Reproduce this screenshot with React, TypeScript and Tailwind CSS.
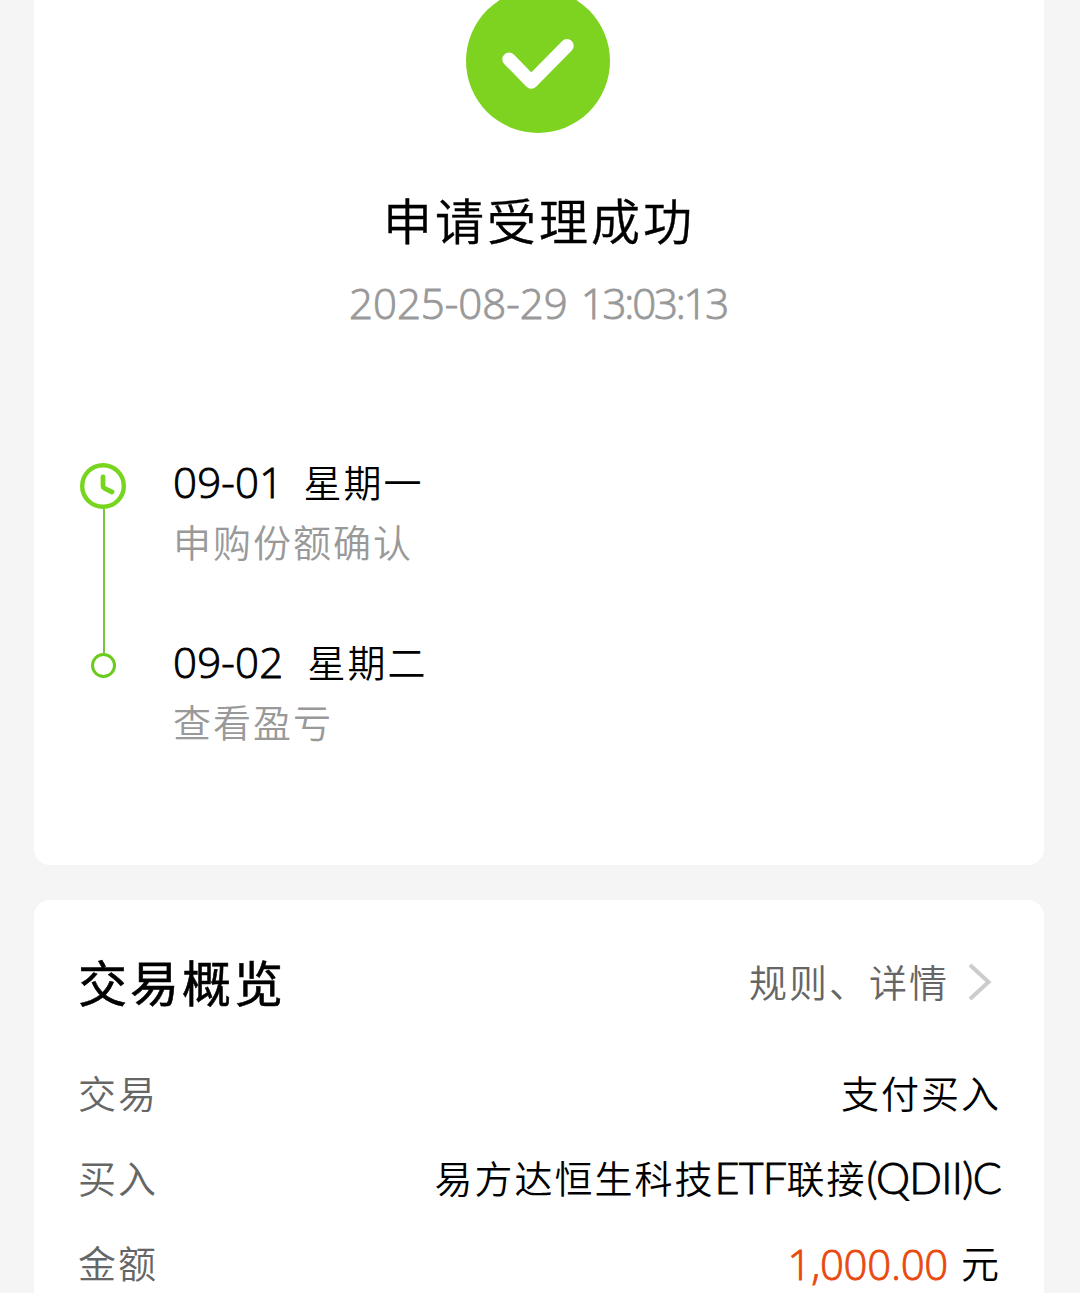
import React from 'react';
import clsx from 'clsx';

const steps = [
  { id: 'confirm', date: '09-01', weekday: '星期一', label: '申购份额确认', gap: 'ml-5' },
  { id: 'profit', date: '09-02', weekday: '星期二', label: '查看盈亏', gap: 'ml-6' }
];

function Digits({ children, className }: { children: React.ReactNode; className?: string }) {
  return (
    <span
      className={clsx(
        "font-['Open_Sans','Noto_Sans_CJK_SC',sans-serif] text-[42px] font-light [-webkit-text-stroke:0.9px_currentColor]",
        className
      )}
    >
      {children}
    </span>
  );
}

function Letters({ children }: { children: React.ReactNode }) {
  return (
    <span className="pt-[3px] font-['Lato','Noto_Sans_CJK_SC',sans-serif] text-[43px] font-light tracking-[-0.7px] [-webkit-text-stroke:0.9px_currentColor]">
      {children}
    </span>
  );
}

function SuccessIcon() {
  return (
    <svg className="mr-0.5 block h-[133px] w-36" viewBox="0 11 144 133" fill="none">
      <circle cx="72" cy="72" r="72" fill="#7ed321" />
      <path
        d="M43 70.3 65.3 93 101 56.7"
        stroke="#fff"
        strokeWidth="13.4"
        strokeLinecap="round"
        strokeLinejoin="round"
      />
    </svg>
  );
}

function ClockIcon() {
  return (
    <svg className="block size-[46px] shrink-0" viewBox="0 0 46 46" fill="none">
      <circle cx="23" cy="23" r="20.8" stroke="#76d51c" strokeWidth="4.4" />
      <path
        d="M23 14V22.5Q23 24.5 24.6 25.3L32 29"
        stroke="#76d51c"
        strokeWidth="4.8"
        strokeLinecap="round"
      />
    </svg>
  );
}

function Timeline() {
  return (
    <div className="flex pl-[46px]">
      <div className="flex w-[46px] flex-col items-center pt-[15px]">
        <ClockIcon />
        <div className="ml-[1px] h-[144px] w-[2px] bg-[#76c53a]" />
        <div className="ml-[1px] size-[25px] shrink-0 rounded-full border-3 border-[#69cb1c]" />
      </div>
      <div className="flex flex-col pl-[47px]">
        {steps.map((step) => (
          <div key={step.id} className="h-[180px]">
            <div className="flex h-[65px] items-center whitespace-nowrap">
              <Digits className="pt-0.5 tracking-[0.2px]">{step.date}</Digits>
              <span className={step.gap}>{step.weekday}</span>
            </div>
            <div className="-mt-[2px] leading-[60px] text-[#999]">{step.label}</div>
          </div>
        ))}
      </div>
    </div>
  );
}

function Row({ label, children }: { label: string; children: React.ReactNode }) {
  return (
    <div className="flex h-[85px] items-center justify-between whitespace-nowrap">
      <span className="text-[#666]">{label}</span>
      <div className="flex items-center">{children}</div>
    </div>
  );
}

export default function App() {
  return (
    <div className="flex h-[1293px] w-[1080px] flex-col gap-[35px] overflow-hidden bg-[#f5f5f5] pr-9 pl-[34px] font-['Noto_Sans_CJK_SC',sans-serif] text-[38px] font-[350] tracking-[2px] text-black">
      {/* Result */}
      <section className="h-[865px] shrink-0 rounded-b-2xl bg-white">
        <div className="flex flex-col items-center">
          <SuccessIcon />
          <h1 className="mt-[51px] text-[49px] leading-[70px] font-[350] tracking-[3px] [-webkit-text-stroke:0.4px_currentColor]">
            申请受理成功
          </h1>
          <div className="mt-[19px] flex gap-[13px] pr-0.5 leading-[60px] text-[#999]">
            <Digits className="tracking-[0px]">2025-08-29</Digits>
            <Digits className="tracking-[-2.2px]">13:03:13</Digits>
          </div>
        </div>
        <div className="mt-[115px]">
          <Timeline />
        </div>
      </section>

      {/* Overview */}
      <section className="h-[440px] shrink-0 rounded-t-2xl bg-white pr-[43px] pl-11">
        <div className="flex h-[149px] items-center justify-between pt-[12px]">
          <h2 className="text-[49px] leading-[70px] font-normal tracking-[3px] [-webkit-text-stroke:0.6px_currentColor]">
            交易概览
          </h2>
          <div className="flex items-center pr-[9px] text-[#666]">
            <span>规则、详情</span>
            <svg className="mt-0.5 ml-[19px] block h-[38px] w-6" viewBox="0 0 24 38" fill="none">
              <path d="M2 2 20.5 19 2 36" stroke="#ccc" strokeWidth="4" />
            </svg>
          </div>
        </div>
        <Row label="交易">支付买入</Row>
        <Row label="买入">
          <span>易方达恒生科技</span>
          <Letters>ETF</Letters>
          <span>联接</span>
          <Letters>(QDII)C</Letters>
        </Row>
        <Row label="金额">
          <Digits className="pt-[3px] tracking-[-0.3px] text-[#e9490f]">1,000.00</Digits>
          <span className="ml-[13px]">元</span>
        </Row>
      </section>
    </div>
  );
}
